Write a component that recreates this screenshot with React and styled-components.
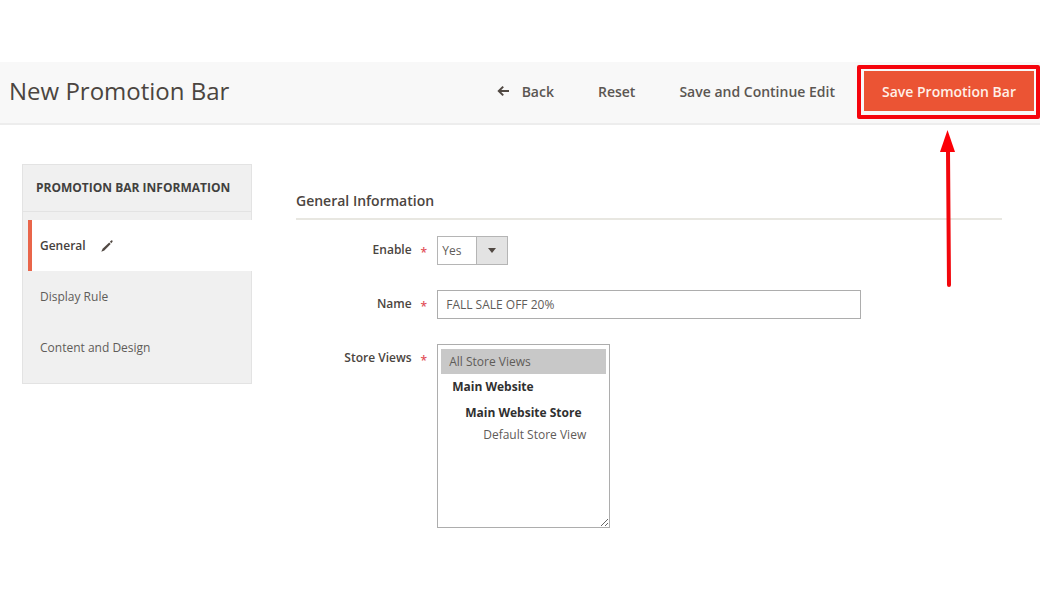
import React, { useState } from 'react'
import styled, { createGlobalStyle } from 'styled-components'

const tabs = ['General', 'Display Rule', 'Content and Design']

function App() {
  const [tab, setTab] = useState('General')
  const [enabled, setEnabled] = useState('Yes')
  const [name, setName] = useState('FALL SALE OFF 20%')
  const [stores, setStores] = useState(['0'])

  const onStores = (e) => setStores([...e.target.selectedOptions].map((o) => o.value))

  return (
    <Page>
      <GlobalStyle />
      <Header>
        <Title>New Promotion Bar</Title>
        <Actions>
          <TextButton type="button">
            <BackIcon viewBox="0 0 13 12" aria-hidden="true">
              <path d="M6.2 1.6 L1.8 6 L6.2 10.4 M2 6 H12" />
            </BackIcon>
            Back
          </TextButton>
          <TextButton type="button">Reset</TextButton>
          <TextButton type="button">Save and Continue Edit</TextButton>
          <Highlight>
            <PrimaryButton type="button">Save Promotion Bar</PrimaryButton>
            <Arrow viewBox="0 0 16 158" aria-hidden="true">
              <path d="M8 20 L9 155" stroke="#f2060c" strokeWidth="4" strokeLinecap="round" />
              <path d="M7.500 0 L15 22 H0 Z" fill="#fc0006" />
            </Arrow>
          </Highlight>
        </Actions>
      </Header>

      <Main>
        <Sidebar>
          <SidebarTitle>Promotion Bar Information</SidebarTitle>
          <TabList>
            {tabs.map((t) => (
              <li key={t}>
                <TabLink href="#" $active={t === tab} onClick={() => setTab(t)}>
                  {t}
                  {t === tab && <Pencil />}
                </TabLink>
              </li>
            ))}
          </TabList>
        </Sidebar>

        <Form>
          <Legend>General Information</Legend>
          <Field>
            <Label htmlFor="enable">Enable<Star>*</Star></Label>
            <SelectWrap>
              <Select id="enable" value={enabled} onChange={(e) => setEnabled(e.target.value)}>
                <option>Yes</option>
                <option>No</option>
              </Select>
            </SelectWrap>
          </Field>
          <Field>
            <Label htmlFor="name">Name<Star>*</Star></Label>
            <TextInput id="name" type="text" value={name} onChange={(e) => setName(e.target.value)} />
          </Field>
          <Field>
            <Label htmlFor="stores">Store Views<Star>*</Star></Label>
            <StoreSelect id="stores" multiple value={stores} onChange={onStores}>
              <option value="0">All Store Views</option>
              <optgroup label="Main Website" />
              <StoreGroup label="Main Website Store">
                <option value="1">Default Store View</option>
              </StoreGroup>
            </StoreSelect>
          </Field>
        </Form>
      </Main>
    </Page>
  )
}

function Pencil() {
  return (
    <PencilIcon viewBox="0 0 12 12" aria-hidden="true">
      <path d="M0.300 11.700 L1.600 8.700 L8.200 2.500 L9.700 4 L3.300 10.400 Z" />
      <path d="M8.900 1.800 L10.200 0.500 Q10.800 0.100 11.300 0.600 Q11.900 1.200 11.500 1.800 L10.300 3.200 Z" />
    </PencilIcon>
  )
}

export default App

const GlobalStyle = createGlobalStyle`
  * {
    box-sizing: border-box;
  }

  body {
    margin: 0;
    background: #fff;
    color: #41362f;
    font-family: "Open Sans", "Noto Sans", sans-serif;
    font-size: 12px;
  }

  button, input, select {
    font-family: inherit;
  }
`

const Page = styled.div`
  padding-top: 62px;
`

const Header = styled.header`
  display: flex;
  align-items: center;
  justify-content: space-between;
  height: 63px;
  padding: 0 6px 3px 9px;
  background: #f8f8f8;
  border-bottom: 2px solid #ededed;
`

const Title = styled.h1`
  margin: 0;
  font-size: 24px;
  font-weight: 400;
  line-height: 32px;
  color: #4b4540;
`

const Actions = styled.div`
  display: flex;
  align-items: center;
`

const TextButton = styled.button`
  display: flex;
  align-items: center;
  height: 40px;
  padding: 0 22px;
  border: 0;
  background: none;
  color: #5b5652;
  font-size: 14px;
  font-weight: 600;
  cursor: pointer;
`

const BackIcon = styled.svg`
  width: 13px;
  height: 12px;
  margin-right: 12px;
  fill: none;
  stroke: #514943;
  stroke-width: 2;
`

const Highlight = styled.div`
  position: relative;
  margin-left: 7px;

  &::after {
    content: "";
    position: absolute;
    inset: -6px -6px -8px -7px;
    border: 4px solid #f5040c;
    border-radius: 2px;
    pointer-events: none;
  }
`

const PrimaryButton = styled.button`
  height: 40px;
  padding: 0 18px;
  border: 0;
  background: #eb5434;
  color: #fff0e8;
  font-size: 14px;
  font-weight: 600;
  cursor: pointer;
`

const Arrow = styled.svg`
  position: absolute;
  top: 59px;
  left: calc(50% - 9px);
  width: 16px;
  height: 158px;
  pointer-events: none;
`

const Main = styled.main`
  display: flex;
  align-items: flex-start;
  gap: 44px;
  padding: 39px 38px 40px 22px;
`

const Sidebar = styled.nav`
  flex: 0 0 230px;
  padding-bottom: 10px;
  background: #f0f0f0;
  border: 1px solid #e3e3e3;
`

const SidebarTitle = styled.h2`
  margin: 0 0 8px;
  padding: 0 13px;
  border-bottom: 1px solid #e3e3e3;
  font-size: 12px;
  font-weight: 700;
  line-height: 46px;
  text-transform: uppercase;
  white-space: nowrap;
  color: #41403e;
`

const TabList = styled.ul`
  margin: 0 -1px 0 5px;
  padding: 0;
  list-style: none;
`

const TabLink = styled.a`
  display: flex;
  align-items: center;
  height: 51px;
  padding-left: 8px;
  border-left: 4px solid ${(props) => (props.$active ? '#e9654a' : 'transparent')};
  background: ${(props) => (props.$active ? '#fff' : 'transparent')};
  font-weight: ${(props) => (props.$active ? 600 : 400)};
  color: ${(props) => (props.$active ? '#46413d' : '#5f5c59')};
  text-decoration: none;
`

const PencilIcon = styled.svg`
  width: 12px;
  height: 12px;
  margin-left: 15px;
  fill: #514943;
`

const Form = styled.form`
  flex: 1;
  padding-top: 25px;
`

const Legend = styled.h2`
  margin: 0 0 16px;
  padding-bottom: 5px;
  border-bottom: 2px solid #e8e7e1;
  font-size: 14px;
  font-weight: 600;
  line-height: 24px;
  color: #4b4540;
`

const Field = styled.div`
  display: grid;
  grid-template-columns: 20% 60%;
  justify-items: start;
  align-items: start;
  margin-bottom: 25px;
`

const Label = styled.label`
  justify-self: end;
  padding-right: 10px;
  font-weight: 600;
  line-height: 28px;
  color: #4b4540;
`

const Star = styled.span`
  margin-left: 9px;
  line-height: 12px;
  vertical-align: sub;
  color: #e2505a;
`

const SelectWrap = styled.div`
  position: relative;

  /* arrow on top of the grey end of the drop-down */
  &::after {
    content: "";
    position: absolute;
    top: 12px;
    right: 12px;
    border: 4px solid transparent;
    border-top: 5px solid #514943;
    border-bottom: 0;
    pointer-events: none;
  }
`

const Select = styled.select`
  display: block;
  width: 71px;
  height: 29px;
  padding: 0 4px;
  appearance: none;
  border: 1px solid #b5b5b5;
  border-radius: 0;
  background: linear-gradient(to left, #e3e3e3 30px, #b5b5b5 30px, #b5b5b5 31px, #fff 31px);
  color: #5f5c59;
  font-size: 12px;
`

const TextInput = styled.input`
  width: 100%;
  height: 29px;
  padding: 0 8px;
  border: 1px solid #adadad;
  border-radius: 0;
  background: #fff;
  color: #5f5c59;
  font-size: 12px;
`

const StoreSelect = styled.select`
  width: 173px;
  height: 184px;
  padding: 4px 3px;
  border: 1px solid #adadad;
  border-radius: 0;
  background: #fff;
  color: #5f5c59;
  font-size: 12px;
  resize: both;
  overflow: auto;

  option {
    padding: 4px 8px;
    line-height: 18px;
  }

  option:checked {
    background: #c8c8c8;
    color: #5f5c59;
  }

  optgroup {
    padding: 4px 9px;
    font-weight: 700;
    line-height: 18px;
    color: #303030;
  }

  optgroup option {
    padding: 4px 0 4px 20px;
    font-weight: 400;
    color: #5f5c59;
  }
`

const StoreGroup = styled.optgroup`
  && {
    padding-left: 22px;
  }
`
